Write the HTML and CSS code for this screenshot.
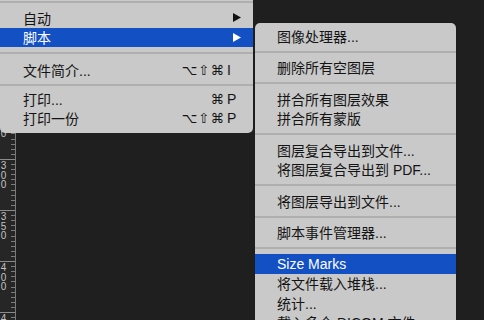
FILE: index.html
```html
<!DOCTYPE html>
<html lang="zh-CN">
<head>
    <meta charset="UTF-8">
    <meta name="viewport" content="width=device-width, initial-scale=1.0">
    <title>脚本菜单</title>
    <link rel="stylesheet" href="styles.css">
</head>
<body>
    <div class="workspace">
        <div class="ruler">
            <div class="ruler-seg"><span>1</span><span>5</span><span>0</span></div>
            <div class="ruler-seg"><span>2</span><span>0</span><span>0</span></div>
            <div class="ruler-seg"><span>2</span><span>5</span><span>0</span></div>
            <div class="ruler-seg"><span>3</span><span>0</span><span>0</span></div>
            <div class="ruler-seg"><span>3</span><span>5</span><span>0</span></div>
            <div class="ruler-seg"><span>4</span><span>0</span><span>0</span></div>
            <div class="ruler-seg"><span>4</span><span>5</span><span>0</span></div>
        </div>
        <div class="canvas"></div>
    </div>

    <div class="menu main-menu">
        <div class="sep first"></div>
        <div class="item">
            <span>自动</span>
            <svg class="arrow" width="8" height="9" viewBox="0 0 8 9"><polygon points="0,0 8,4.5 0,9" fill="#111"/></svg>
        </div>
        <div class="item active">
            <span>脚本</span>
            <svg class="arrow" width="8" height="9" viewBox="0 0 8 9"><polygon points="0,0 8,4.5 0,9" fill="#fff"/></svg>
        </div>
        <div class="sep wide"></div>
        <div class="item">
            <span>文件简介...</span>
            <span class="keys"><span class="mods">⌥⇧⌘</span><span class="key">I</span></span>
        </div>
        <div class="sep narrow"></div>
        <div class="item">
            <span>打印...</span>
            <span class="keys"><span class="mods">⌘</span><span class="key">P</span></span>
        </div>
        <div class="item">
            <span>打印一份</span>
            <span class="keys"><span class="mods">⌥⇧⌘</span><span class="key">P</span></span>
        </div>
    </div>

    <div class="menu sub-menu">
        <div class="item">图像处理器...</div>
        <div class="sep"></div>
        <div class="item">删除所有空图层</div>
        <div class="sep"></div>
        <div class="item">拼合所有图层效果</div>
        <div class="item">拼合所有蒙版</div>
        <div class="sep"></div>
        <div class="item">图层复合导出到文件...</div>
        <div class="item">将图层复合导出到 PDF...</div>
        <div class="sep"></div>
        <div class="item">将图层导出到文件...</div>
        <div class="sep"></div>
        <div class="item">脚本事件管理器...</div>
        <div class="sep"></div>
        <div class="item active">Size Marks</div>
        <div class="item">将文件载入堆栈...</div>
        <div class="item">统计...</div>
        <div class="item">载入多个 DICOM 文件...</div>
    </div>
</body>
</html>
```

FILE: styles.css
```css
body {
    margin: 0;
    height: 100vh;
    overflow: hidden;
    background: #1f1f1f;
    font-family: "Liberation Sans", "Noto Sans CJK SC", sans-serif;
}
.workspace {
    display: flex;
    height: 100vh;
}
.ruler {
    width: 15px;
    border-right: 1px solid #7a7a7a;
    background: #262626;
    padding-top: 6px;
    flex-shrink: 0;
}
.ruler-seg {
    height: 51px;
    box-sizing: border-box;
    border-top: 1px solid #8a8a8a;
    display: flex;
    flex-direction: column;
    padding-top: 1px;
    background-image: repeating-linear-gradient(to bottom, transparent 0, transparent 4.1px, #7c7c7c 4.1px, #7c7c7c 5.1px);
    background-size: 4px 100%;
    background-position: right top;
    background-repeat: no-repeat;
}
.ruler-seg span {
    width: 7px;
    text-align: center;
    font-size: 10px;
    line-height: 9.5px;
    color: #c2c2c2;
}
.canvas {
    flex: 1;
    background: #1f1f1f;
}
.menu {
    position: absolute;
    background: #c9c9c9;
    color: #141414;
    font-size: 14px;
}
.main-menu {
    left: 0;
    top: 0;
    width: 253px;
    padding-bottom: 5px;
    border-radius: 0 0 5px 5px;
}
.sub-menu {
    left: 255px;
    top: 23px;
    width: 201px;
    padding-top: 3px;
    border-radius: 5px 5px 0 0;
    box-shadow: 0 0 1px rgba(0, 0, 0, 0.4);
}
.item {
    display: flex;
    justify-content: space-between;
    align-items: center;
    height: 19.5px;
    padding: 0 12px 0 23px;
    white-space: nowrap;
}
.sub-menu .item {
    padding-left: 22px;
}
.item.active {
    background: #1250c4;
    color: #ffffff;
}
.sep {
    height: 2px;
    margin: 5px 0;
    background: #afafaf;
}
.sep.first {
    margin-top: 1px;
}
.sep.wide {
    margin: 5px 0 6px;
}
.sep.narrow {
    margin: 4px 0 3.5px;
}
.keys {
    display: flex;
    align-items: center;
    margin-right: 4px;
}
.mods {
    font-family: "DejaVu Sans", sans-serif;
    font-size: 13.5px;
    letter-spacing: 1px;
    margin-right: 2px;
}
.key {
    width: 10px;
    font-size: 14px;
}
.arrow {
    display: block;
}
```
